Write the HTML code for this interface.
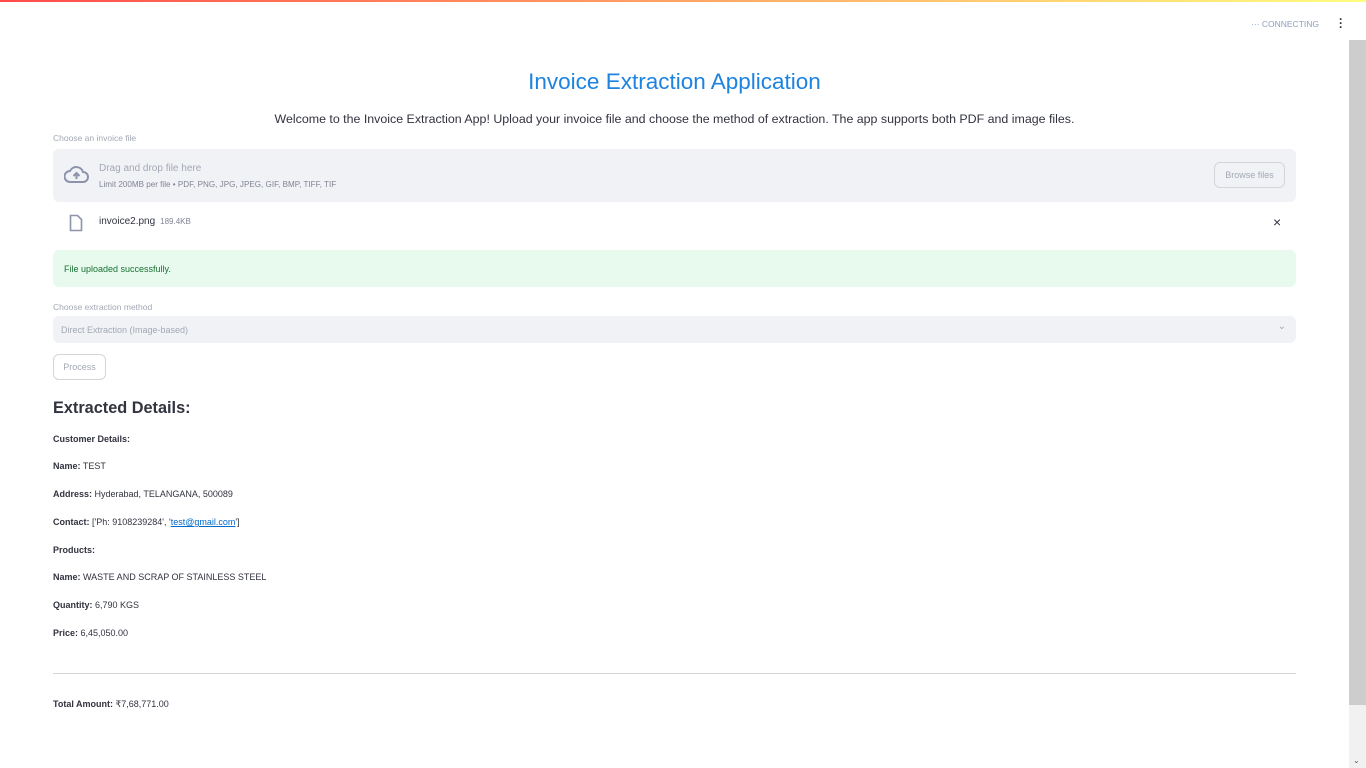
<!DOCTYPE html>
<html><head><meta charset="utf-8"><style>
*{box-sizing:border-box;margin:0;padding:0}
body{width:1366px;height:768px;overflow:hidden;background:#fff;font-family:"Liberation Sans","DejaVu Sans",sans-serif;color:#31333f;position:relative}
.topbar{position:absolute;top:0;left:0;width:1366px;height:2px;background:linear-gradient(90deg,#ff4b4b,#fffd80)}
.abs{position:absolute}
.sb{position:absolute;left:1349px;top:40px;width:17px;height:728px;background:#f1f1f1}
.thumb{position:absolute;left:1349px;top:40px;width:17px;height:665px;background:#cdcdcd}
.lbl{font-size:8.5px;color:#a3a8b4}
.b{font-weight:bold}
.t{font-size:9px;color:#31333f}
</style></head><body>
<div class="topbar"></div>
<div class="abs" style="left:1251px;top:19px;font-size:8.5px;color:#8aa0c0">··· CONNECTING</div>
<div class="abs" style="left:1339px;top:17px;font-size:12px;font-weight:bold;color:#31333f;line-height:4px">·<br>·<br>·</div>
<div class="sb"></div><div class="thumb"></div>
<div class="abs" style="left:1353px;top:756px;font-size:8px;color:#555">⌄</div>

<div class="abs" style="left:0;width:1349px;top:69px;text-align:center;font-size:22.5px;color:#1c83e1">Invoice Extraction Application</div>
<div class="abs" style="left:0;width:1349px;top:112px;text-align:center;font-size:12.4px;color:#31333f">Welcome to the Invoice Extraction App! Upload your invoice file and choose the method of extraction. The app supports both PDF and image files.</div>

<div class="abs lbl" style="left:53px;top:133px">Choose an invoice file</div>
<div class="abs" style="left:53px;top:149px;width:1243px;height:53px;background:#f0f2f6;border-radius:6px">
 <svg class="abs" style="left:11px;top:16px" width="25" height="20" viewBox="0 0 25 20"><path d="M6 17h13a5 5 0 0 0 0-10 7 7 0 0 0-13-1 5.5 5.5 0 0 0 0 11z" fill="none" stroke="#8c93ab" stroke-width="2"/><path d="M12.5 14V8M9.5 11l3-3 3 3" fill="none" stroke="#8c93ab" stroke-width="2"/></svg>
 <div class="abs" style="left:46px;top:14px;font-size:10px;color:#a3a8b4">Drag and drop file here</div>
 <div class="abs" style="left:46px;top:31px;font-size:8.1px;color:#808495">Limit 200MB per file • PDF, PNG, JPG, JPEG, GIF, BMP, TIFF, TIF</div>
 <div class="abs" style="left:1161px;top:13px;width:71px;height:26px;border:1px solid #d3d5da;border-radius:6px;font-size:9px;color:#a3a8b4;text-align:center;line-height:25px">Browse files</div>
</div>
<svg class="abs" style="left:69px;top:214px" width="14" height="18" viewBox="0 0 14 18"><path d="M1.5 1.5h7l4 4v11h-11z" fill="none" stroke="#8c93ab" stroke-width="1.6"/></svg>
<div class="abs" style="left:99px;top:216px;font-size:10px;color:#31333f">invoice2.png <span style="font-size:8px;color:#808495">&nbsp;189.4KB</span></div>
<div class="abs" style="left:1273px;top:214px;font-size:14px;color:#31333f">×</div>

<div class="abs" style="left:53px;top:250px;width:1243px;height:37px;background:#e8f9ee;border-radius:6px;font-size:9px;color:#177233;padding:14px 0 0 11px">File uploaded successfully.</div>

<div class="abs lbl" style="left:53px;top:302px">Choose extraction method</div>
<div class="abs" style="left:53px;top:316px;width:1243px;height:27px;background:#f0f2f6;border-radius:6px;font-size:9px;color:#a3a8b4;padding:9px 0 0 8px">Direct Extraction (Image-based)<span class="abs" style="right:10px;top:5px;font-size:10px">⌄</span></div>

<div class="abs" style="left:53px;top:354px;width:53px;height:26px;border:1px solid #d3d5da;border-radius:6px;font-size:9px;color:#a3a8b4;text-align:center;line-height:25px">Process</div>

<div class="abs b" style="left:53px;top:399px;font-size:16.3px;color:#31333f">Extracted Details:</div>
<div class="abs t b" style="left:53px;top:434px">Customer Details:</div>
<div class="abs t" style="left:53px;top:461px"><b>Name:</b> TEST</div>
<div class="abs t" style="left:53px;top:489px"><b>Address:</b> Hyderabad, TELANGANA, 500089</div>
<div class="abs t" style="left:53px;top:517px"><b>Contact:</b> ['Ph: 9108239284', '<span style="color:#0068c9;text-decoration:underline">test@gmail.com</span>']</div>
<div class="abs t b" style="left:53px;top:545px">Products:</div>
<div class="abs t" style="left:53px;top:572px"><b>Name:</b> WASTE AND SCRAP OF STAINLESS STEEL</div>
<div class="abs t" style="left:53px;top:600px"><b>Quantity:</b> 6,790 KGS</div>
<div class="abs t" style="left:53px;top:628px"><b>Price:</b> 6,45,050.00</div>
<div class="abs" style="left:53px;top:673px;width:1243px;height:1px;background:#d6d6d9"></div>
<div class="abs t" style="left:53px;top:699px"><b>Total Amount:</b> ₹7,68,771.00</div>
</body></html>
